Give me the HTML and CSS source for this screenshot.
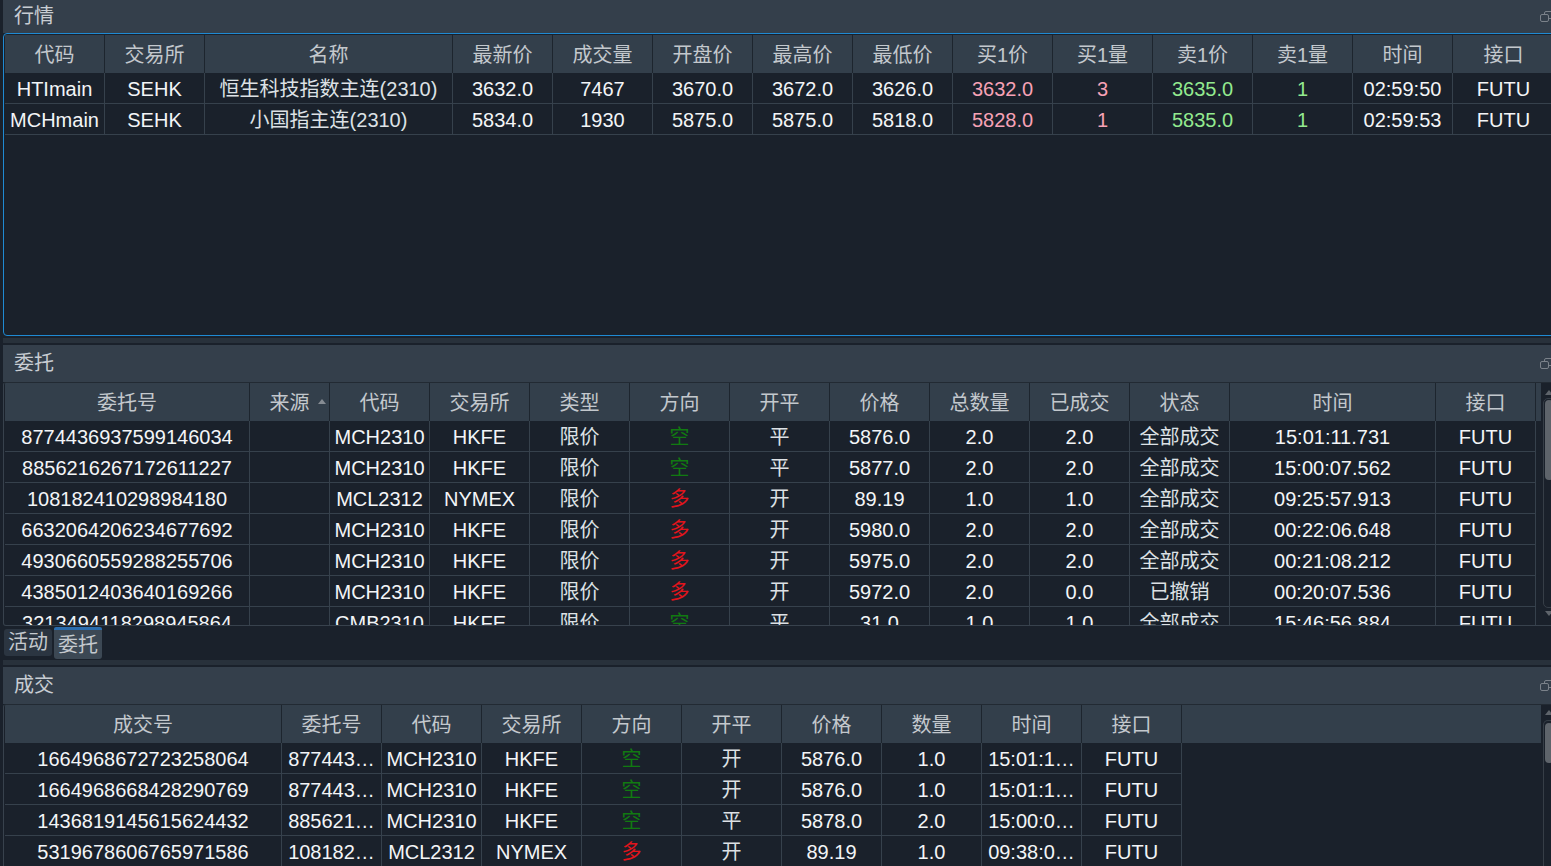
FILE: index.html
```html
<!DOCTYPE html>
<html lang="zh">
<head>
<meta charset="utf-8">
<title>行情</title>
<link rel="stylesheet" href="styles.css">
</head>
<body>
<div class="app">
  <section class="panel">
    <div class="title t1"><span class="title-text">行情</span>
      <svg class="restore" width="14" height="12" viewBox="0 0 14 12"><rect x="4.5" y="0.5" width="8" height="7" rx="1.5" fill="none" stroke="#7b828a"/><rect x="0.5" y="3.5" width="8" height="7" rx="1.5" fill="#343f4b" stroke="#7b828a"/></svg>
    </div>
    <div class="view quote">
      <div class="grid g1 head">
        <div class="h">代码</div><div class="h">交易所</div><div class="h">名称</div><div class="h">最新价</div><div class="h">成交量</div><div class="h">开盘价</div><div class="h">最高价</div><div class="h">最低价</div><div class="h">买1价</div><div class="h">买1量</div><div class="h">卖1价</div><div class="h">卖1量</div><div class="h">时间</div><div class="h">接口</div>
      </div>
      <div class="grid g1 row">
        <div class="c">HTImain</div><div class="c">SEHK</div><div class="c cn">恒生科技指数主连(2310)</div><div class="c">3632.0</div><div class="c">7467</div><div class="c">3670.0</div><div class="c">3672.0</div><div class="c">3626.0</div><div class="c pink">3632.0</div><div class="c pink">3</div><div class="c lgreen">3635.0</div><div class="c lgreen">1</div><div class="c">02:59:50</div><div class="c">FUTU</div>
      </div>
      <div class="grid g1 row">
        <div class="c">MCHmain</div><div class="c">SEHK</div><div class="c cn">小国指主连(2310)</div><div class="c">5834.0</div><div class="c">1930</div><div class="c">5875.0</div><div class="c">5875.0</div><div class="c">5818.0</div><div class="c pink">5828.0</div><div class="c pink">1</div><div class="c lgreen">5835.0</div><div class="c lgreen">1</div><div class="c">02:59:53</div><div class="c">FUTU</div>
      </div>
    </div>
  </section>

  <div class="splitter"></div>

  <section class="panel">
    <div class="title t2"><span class="title-text">委托</span>
      <svg class="restore" width="14" height="12" viewBox="0 0 14 12"><rect x="4.5" y="0.5" width="8" height="7" rx="1.5" fill="none" stroke="#7b828a"/><rect x="0.5" y="3.5" width="8" height="7" rx="1.5" fill="#343f4b" stroke="#7b828a"/></svg>
    </div>
    <div class="view orders">
      <div class="cells">
        <div class="grid g2 head">
          <div class="h">委托号</div><div class="h sorted">来源<span class="sort-up"></span></div><div class="h">代码</div><div class="h">交易所</div><div class="h">类型</div><div class="h">方向</div><div class="h">开平</div><div class="h">价格</div><div class="h">总数量</div><div class="h">已成交</div><div class="h">状态</div><div class="h">时间</div><div class="h">接口</div><div class="h filler"></div>
        </div>
        <div class="grid g2 row">
          <div class="c">8774436937599146034</div><div class="c"></div><div class="c">MCH2310</div><div class="c">HKFE</div><div class="c cn">限价</div><div class="c short">空</div><div class="c cn">平</div><div class="c">5876.0</div><div class="c">2.0</div><div class="c">2.0</div><div class="c cn">全部成交</div><div class="c">15:01:11.731</div><div class="c">FUTU</div>
        </div>
        <div class="grid g2 row">
          <div class="c">8856216267172611227</div><div class="c"></div><div class="c">MCH2310</div><div class="c">HKFE</div><div class="c cn">限价</div><div class="c short">空</div><div class="c cn">平</div><div class="c">5877.0</div><div class="c">2.0</div><div class="c">2.0</div><div class="c cn">全部成交</div><div class="c">15:00:07.562</div><div class="c">FUTU</div>
        </div>
        <div class="grid g2 row">
          <div class="c">108182410298984180</div><div class="c"></div><div class="c">MCL2312</div><div class="c">NYMEX</div><div class="c cn">限价</div><div class="c long">多</div><div class="c cn">开</div><div class="c">89.19</div><div class="c">1.0</div><div class="c">1.0</div><div class="c cn">全部成交</div><div class="c">09:25:57.913</div><div class="c">FUTU</div>
        </div>
        <div class="grid g2 row">
          <div class="c">6632064206234677692</div><div class="c"></div><div class="c">MCH2310</div><div class="c">HKFE</div><div class="c cn">限价</div><div class="c long">多</div><div class="c cn">开</div><div class="c">5980.0</div><div class="c">2.0</div><div class="c">2.0</div><div class="c cn">全部成交</div><div class="c">00:22:06.648</div><div class="c">FUTU</div>
        </div>
        <div class="grid g2 row">
          <div class="c">4930660559288255706</div><div class="c"></div><div class="c">MCH2310</div><div class="c">HKFE</div><div class="c cn">限价</div><div class="c long">多</div><div class="c cn">开</div><div class="c">5975.0</div><div class="c">2.0</div><div class="c">2.0</div><div class="c cn">全部成交</div><div class="c">00:21:08.212</div><div class="c">FUTU</div>
        </div>
        <div class="grid g2 row">
          <div class="c">4385012403640169266</div><div class="c"></div><div class="c">MCH2310</div><div class="c">HKFE</div><div class="c cn">限价</div><div class="c long">多</div><div class="c cn">开</div><div class="c">5972.0</div><div class="c">2.0</div><div class="c">0.0</div><div class="c cn">已撤销</div><div class="c">00:20:07.536</div><div class="c">FUTU</div>
        </div>
        <div class="grid g2 row">
          <div class="c">3213494118298945864</div><div class="c"></div><div class="c">CMB2310</div><div class="c">HKFE</div><div class="c cn">限价</div><div class="c short">空</div><div class="c cn">平</div><div class="c">31.0</div><div class="c">1.0</div><div class="c">1.0</div><div class="c cn">全部成交</div><div class="c">15:46:56.884</div><div class="c">FUTU</div>
        </div>
      </div>
      <div class="vscroll vs2">
        <span class="arrow-up"></span>
        <div class="track"><div class="thumb th2"></div></div>
        <span class="arrow-down"></span>
      </div>
    </div>
  </section>

  <div class="tabs">
    <div class="tab">活动</div>
    <div class="tab active">委托</div>
  </div>

  <div class="splitter s2"></div>

  <section class="panel grow">
    <div class="title t2"><span class="title-text">成交</span>
      <svg class="restore" width="14" height="12" viewBox="0 0 14 12"><rect x="4.5" y="0.5" width="8" height="7" rx="1.5" fill="none" stroke="#7b828a"/><rect x="0.5" y="3.5" width="8" height="7" rx="1.5" fill="#343f4b" stroke="#7b828a"/></svg>
    </div>
    <div class="view trades">
      <div class="cells">
        <div class="grid g3 head">
          <div class="h">成交号</div><div class="h">委托号</div><div class="h">代码</div><div class="h">交易所</div><div class="h">方向</div><div class="h">开平</div><div class="h">价格</div><div class="h">数量</div><div class="h">时间</div><div class="h">接口</div><div class="h filler"></div>
        </div>
        <div class="grid g3 row">
          <div class="c">1664968672723258064</div><div class="c">877443…</div><div class="c">MCH2310</div><div class="c">HKFE</div><div class="c short">空</div><div class="c cn">开</div><div class="c">5876.0</div><div class="c">1.0</div><div class="c">15:01:1…</div><div class="c">FUTU</div>
        </div>
        <div class="grid g3 row">
          <div class="c">1664968668428290769</div><div class="c">877443…</div><div class="c">MCH2310</div><div class="c">HKFE</div><div class="c short">空</div><div class="c cn">开</div><div class="c">5876.0</div><div class="c">1.0</div><div class="c">15:01:1…</div><div class="c">FUTU</div>
        </div>
        <div class="grid g3 row">
          <div class="c">1436819145615624432</div><div class="c">885621…</div><div class="c">MCH2310</div><div class="c">HKFE</div><div class="c short">空</div><div class="c cn">平</div><div class="c">5878.0</div><div class="c">2.0</div><div class="c">15:00:0…</div><div class="c">FUTU</div>
        </div>
        <div class="grid g3 row">
          <div class="c">5319678606765971586</div><div class="c">108182…</div><div class="c">MCL2312</div><div class="c">NYMEX</div><div class="c long">多</div><div class="c cn">开</div><div class="c">89.19</div><div class="c">1.0</div><div class="c">09:38:0…</div><div class="c">FUTU</div>
        </div>
      </div>
      <div class="vscroll vs3">
        <span class="arrow-up"></span>
        <div class="track"><div class="thumb th3"></div></div>
      </div>
    </div>
  </section>
</div>
</body>
</html>
```

FILE: styles.css
```css
* { box-sizing: border-box; }
html, body { margin: 0; padding: 0; }
body {
  width: 1551px;
  height: 866px;
  overflow: hidden;
  background: #1a212b;
  font-family: "Liberation Sans", "Noto Sans CJK SC", sans-serif;
  font-size: 20px;
  color: #f3f5f7;
}
.app {
  width: 1556px;
  height: 866px;
  padding-left: 3px;
  display: flex;
  flex-direction: column;
}
.panel { display: flex; flex-direction: column; }
.panel.grow { flex: 1; min-height: 0; }

.title {
  display: flex;
  align-items: center;
  justify-content: space-between;
  background: #343f4b;
  color: #c8cdd3;
  padding-left: 11px;
  flex: none;
}
.t1 { height: 33px; line-height: 33px; }
.t2 { height: 37px; line-height: 37px; }
.title-text { display: block; }
.restore { display: block; flex: none; margin-right: 2px; }

.view {
  display: flex;
  background: #1a212b;
  overflow: hidden;
  flex: none;
}
.quote {
  height: 303px;
  border: 1px solid #1f8ad3;
  border-radius: 4px 0 0 4px;
  padding: 1px 0 0 1px;
  flex-direction: column;
}
.orders {
  height: 244px;
  border: 1px solid #38424d;
  border-top-color: #222a33;
  border-radius: 3px 0 0 3px;
  padding-left: 1px;
}
.trades {
  flex: 1;
  min-height: 0;
  border: 1px solid #38424d;
  border-top-color: #222a33;
  border-radius: 3px 0 0 0;
  border-bottom: none;
  padding-left: 1px;
}
.cells {
  width: 1536px;
  flex: none;
  overflow: hidden;
}

.grid { display: grid; }
.g1 { grid-template-columns: 100px 100px 248px repeat(10, 100px) 1fr; }
.g2 { grid-template-columns: 245px 80px repeat(9, 100px) 206px 100px 5px; }
.g3 { grid-template-columns: 277px repeat(9, 100px) 359px; }

.h {
  height: 38px;
  padding-top: 2px;
  line-height: 36px;
  background: #333f4b;
  border-right: 1px solid #1d252e;
  color: #c3c8cd;
  text-align: center;
  white-space: nowrap;
  overflow: hidden;
}
.h.filler { border-right: none; }
.h.sorted { position: relative; }
.sort-up {
  position: absolute;
  right: 3px;
  top: 16px;
  width: 0;
  height: 0;
  border-left: 4px solid transparent;
  border-right: 4px solid transparent;
  border-bottom: 5px solid #868c93;
}

.c {
  height: 31px;
  padding-top: 2px;
  line-height: 28px;
  border-right: 1px solid #36414c;
  border-bottom: 1px solid #36414c;
  text-align: center;
  white-space: nowrap;
  overflow: hidden;
}
.cn { color: #dde1e5; }
.pink { color: #f7a2b6; }
.lgreen { color: #93ea8f; }
.short { color: #117a11; }
.long { color: #e3141c; }

.vscroll {
  width: 14px;
  flex: none;
  display: flex;
  flex-direction: column;
  padding-left: 2px;
  gap: 3px;
}
.vs2 { padding-top: 7px; padding-bottom: 9px; }
.vs3 { padding-top: 5px; gap: 5px; }
.arrow-up, .arrow-down {
  display: block;
  width: 0;
  height: 0;
  margin-left: 2px;
  border-left: 4px solid transparent;
  border-right: 4px solid transparent;
  flex: none;
}
.arrow-up { border-bottom: 5px solid #5e646b; }
.arrow-down { border-top: 5px solid #5e646b; }
.track {
  flex: 1;
  border: 1px solid #363e47;
  border-radius: 5px;
  padding: 1px;
}
.vs3 .track { border-bottom: none; border-radius: 5px 5px 0 0; padding-top: 2px; }
.thumb {
  background: #5e646b;
  border-radius: 4px;
}
.th2 { height: 80px; }
.th3 { height: 40px; }

.splitter {
  height: 9px;
  flex: none;
  background: #28313b;
  border-top: 2px solid #1a212b;
  border-bottom: 2px solid #1a212b;
}
.splitter.s2 { height: 7px; border-top: none; }

.tabs {
  height: 34px;
  flex: none;
  display: flex;
  align-items: flex-start;
  gap: 2px;
  padding-left: 1px;
  padding-top: 1px;
}
.tab {
  width: 48px;
  height: 27px;
  margin-top: 2px;
  line-height: 27px;
  text-align: center;
  background: #2b3541;
  border-radius: 3px;
  color: #c4c9ce;
}
.tab.active {
  height: 32px;
  margin-top: 0;
  line-height: 30px;
  background: #3c4854;
  border-top: 3px solid #2b6cad;
  border-radius: 2px 2px 3px 3px;
}
```
